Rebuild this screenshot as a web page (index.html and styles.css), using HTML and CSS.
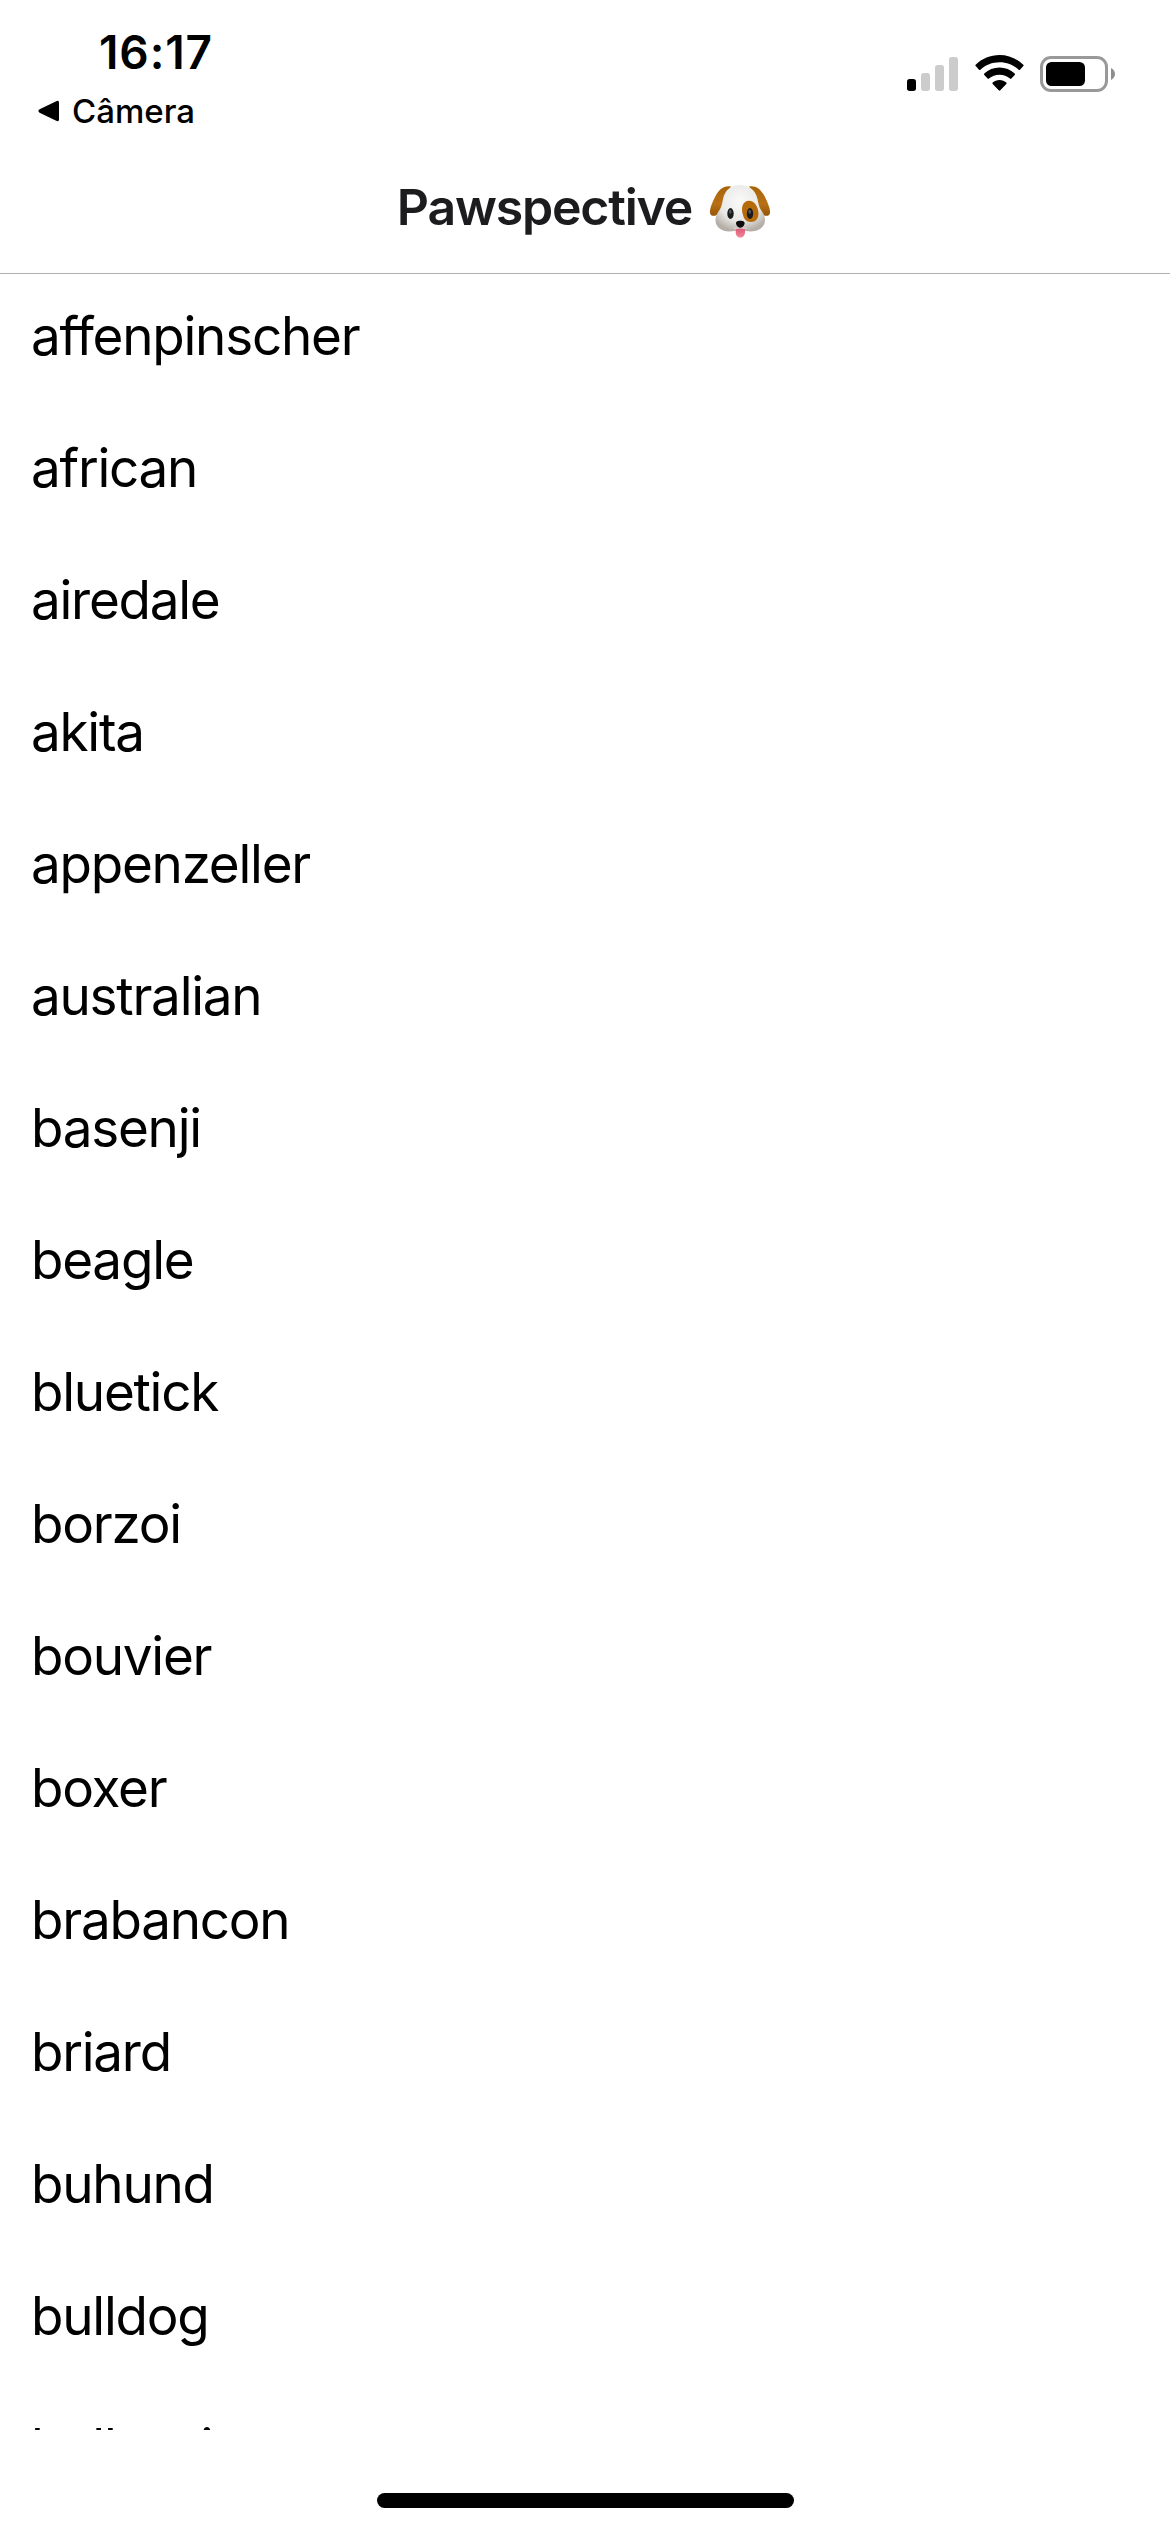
FILE: index.html
```html
<!DOCTYPE html>
<html lang="pt-BR">
<head>
<meta charset="utf-8">
<title>Pawspective</title>
<link rel="stylesheet" href="styles.css">
</head>
<body>
<div class="screen">
  <div class="status-bar">
    <div class="status-left">
      <div class="time">16:17</div>
      <div class="back-link">
        <svg class="back-arrow" width="22" height="22" viewBox="0 0 22 22"><path d="M1.6 9.3 18.8 1Q21 .2 21 2.600V19.400Q21 21.800 18.800 21L1.600 12.700Q-.8 11 1.600 9.300Z"/></svg>
        <span>Câmera</span>
      </div>
    </div>
    <div class="status-icons">
      <svg width="52" height="36" viewBox="0 0 52 36">
        <rect x="0" y="22" width="9" height="12" rx="2.700"/>
        <g fill="#ccc"><rect x="14" y="16" width="9" height="18" rx="2.700"/><rect x="28" y="8" width="9" height="26" rx="2.700"/><rect x="42" y="0" width="9" height="34" rx="2.700"/></g>
      </svg>
      <svg class="wifi" width="49" height="36" viewBox="0 0 49 36">
        <path d="M24.500 0C15.500 0 7 3.600.700 9.700Q0 10.400.700 11.100L4 14.700Q4.700 15.400 5.400 14.700C10.500 9.900 17.200 7.200 24.500 7.200S38.500 9.900 43.600 14.700Q44.300 15.400 45 14.700L48.300 11.100Q49 10.400 48.300 9.700C42 3.600 33.500 0 24.500 0Z"/>
        <path d="M24.500 12.600C18.700 12.600 13.400 14.900 9.300 18.500Q8.600 19.200 9.300 19.900L12.600 23.600Q13.300 24.200 14 23.600C16.800 21.200 20.500 19.700 24.500 19.700S32.200 21.200 35 23.600Q35.700 24.200 36.400 23.600L39.700 19.900Q40.400 19.200 39.700 18.500C35.600 14.900 30.300 12.600 24.500 12.600Z"/>
        <path d="M24.500 25C21.900 25 19.500 25.900 17.700 27.500Q17 28.200 17.700 28.900L23.700 35.300Q24.500 36 25.300 35.300L31.300 28.900Q32 28.200 31.300 27.500C29.500 25.900 27.100 25 24.500 25Z"/>
      </svg>
      <svg width="76" height="37" viewBox="0 0 76 37">
        <rect x="1.500" y="1.500" width="65" height="33" rx="9.500" fill="none" stroke="#999" stroke-width="3"/>
        <rect x="6" y="6" width="39" height="24" rx="5.500"/>
        <path d="M71 12Q75 14.500 75 18T71 24Z" fill="#8e8e8e"/>
      </svg>
    </div>
  </div>

  <header class="nav-bar">
    <h1 class="title">Pawspective</h1>
    <svg class="dog" width="62" height="54" viewBox="0 0 62 54" role="img" aria-label="🐶">
      <defs>
        <radialGradient id="face" cx=".5" cy=".35" r=".65"><stop offset="0" stop-color="#fafafa"/><stop offset=".65" stop-color="#e9e8e6"/><stop offset="1" stop-color="#b5afa8"/></radialGradient>
        <linearGradient id="ear" x1="0" y1="0" x2="0" y2="1"><stop offset="0" stop-color="#a86407"/><stop offset=".6" stop-color="#b97016"/><stop offset="1" stop-color="#955407"/></linearGradient>
        <linearGradient id="tongue" x1="0" y1="0" x2="0" y2="1"><stop offset="0" stop-color="#d95673"/><stop offset="1" stop-color="#f28797"/></linearGradient>
      </defs>
      <path d="M22 2.500C15 1 9.500 5.500 5.500 14C3 19.500.500 25 1 29C1.600 32.500 6 32.700 9 30C14 24 16 12 22 2.500Z" fill="url(#ear)"/>
      <path d="M40 2.500C47 1 52.500 5.500 56.500 14C59 19.500 61.500 25 61 29C60.400 32.500 56 32.700 53 30C48 24 46 12 40 2.500Z" fill="url(#ear)"/>
      <path d="M31 1C40 1 46.500 6 48.500 15C49.500 20 50 23 52 26C54 29 56 31.500 56 36C56 43.500 49 47.500 42 47.500C38 47.500 35 46.500 31 46.500S24 47.500 20 47.500C13 47.500 6.500 43.500 6.500 36C6.500 31.500 8.500 29 10.500 26C12.500 23 13 20 14 15C16 6 22 1 31 1Z" fill="url(#face)"/>
      <path d="M40 16.700C45.500 16.700 49.500 23 49.500 29.500C49.500 34.500 46.500 38 42 38C37 38 35 35 34 31C31.500 23.500 34 16.700 40 16.700Z" fill="#b66b0b"/>
      <ellipse cx="21.500" cy="29.500" rx="3.200" ry="5.400" fill="#191b1c"/>
      <ellipse cx="41" cy="29.500" rx="3.200" ry="5.400" fill="#191b1c"/>
      <ellipse cx="21.200" cy="27.700" rx="1.300" ry="2" fill="#50585b"/>
      <ellipse cx="40.700" cy="27.700" rx="1.300" ry="2" fill="#50585b"/>
      <path d="M27 43.500Q31 46 36 43.500V48C36 51.500 34 53.500 31.300 53.500S26.700 51.500 26.700 48Z" fill="url(#tongue)"/>
      <path d="M25 44Q29.500 45 31.300 42.500Q33 45 37.500 44" fill="none" stroke="#d8d4cf" stroke-width="1.400"/>
      <path d="M31.300 36.800C35 36.800 36 38.300 35.500 40C35 42 33 43.800 31.300 43.800S27.500 42 27.100 40C26.700 38.300 27.500 36.800 31.300 36.800Z" fill="#0e0e0e"/>
    </svg>
  </header>

  <ul class="breeds">
    <li>affenpinscher</li>
    <li>african</li>
    <li>airedale</li>
    <li>akita</li>
    <li>appenzeller</li>
    <li>australian</li>
    <li>basenji</li>
    <li>beagle</li>
    <li>bluetick</li>
    <li>borzoi</li>
    <li>bouvier</li>
    <li>boxer</li>
    <li>brabancon</li>
    <li>briard</li>
    <li>buhund</li>
    <li>bulldog</li>
    <li>bullterrier</li>
  </ul>

  <footer class="home-area"><div class="home-indicator"></div></footer>
</div>
</body>
</html>
```
FILE: styles.css
```css
* { box-sizing: border-box; }

body {
  margin: 0;
  background: #fff;
  color: #000;
  font-family: Inter, "Liberation Sans", sans-serif;
}

.screen {
  display: flex;
  flex-direction: column;
  width: 1170px;
  height: 2532px;
  overflow: hidden;
}

.status-bar {
  display: flex;
  justify-content: space-between;
  height: 141px;
  padding: 28px 54px 0 38px;
}

.time {
  padding-left: 61px;
  font-size: 46px;
  font-weight: 600;
  line-height: 48px;
  letter-spacing: 0.9px;
}

.back-link {
  display: flex;
  align-items: center;
  gap: 12px;
  height: 40px;
  margin-top: 15px;
  font-size: 33px;
  font-weight: 500;
  line-height: 40px;
}

.status-icons {
  display: flex;
  align-items: flex-start;
  padding-top: 28px;
}

.status-icons svg { margin-top: 1px; }
.status-icons .wifi { margin: -1px 16px 0 16px; }
.status-icons svg:last-child { margin-top: 0; }

.nav-bar {
  display: flex;
  justify-content: center;
  height: 133px;
  padding: 36px 2px 0 0;
  gap: 17px;
  border-bottom: 1px solid #b0b0b0;
}

.title {
  margin: 0;
  color: #1c1c1e;
  font-size: 50px;
  font-weight: 600;
  line-height: 60px;
  letter-spacing: -1.2px;
}

.dog { margin-top: 7px; }

.breeds {
  height: 2156px;
  margin: 0;
  padding: 0 0 0 31px;
  overflow: hidden;
  list-style: none;
}

.breeds li {
  height: 132px;
  padding-top: 30px;
  font-size: 53px;
  line-height: 64px;
  letter-spacing: -1.25px;
}

.home-area {
  display: flex;
  flex: 1;
  justify-content: center;
  padding-top: 63px;
}

.home-indicator {
  width: 417px;
  height: 15px;
  border-radius: 8px;
  background: #000;
}
```
